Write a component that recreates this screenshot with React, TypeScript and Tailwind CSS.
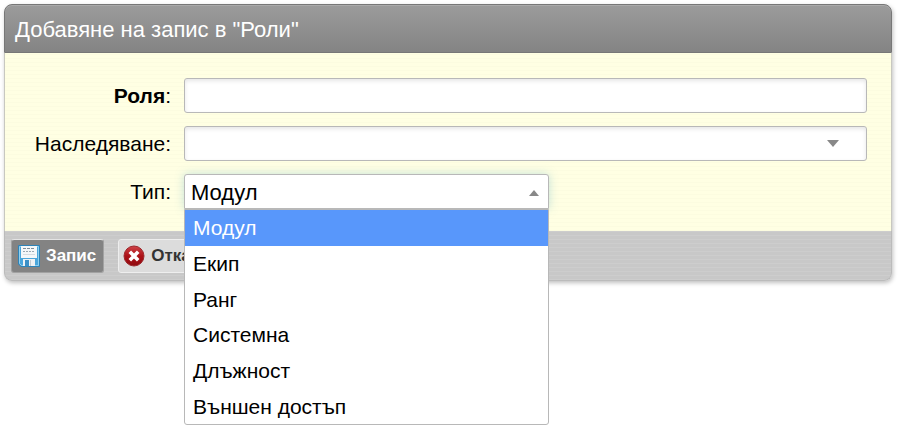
import { useState } from "react";

const types = ["Модул", "Екип", "Ранг", "Системна", "Длъжност", "Външен достъп"];

const field =
  "h-[35px] w-full appearance-none rounded-[3px] border border-[#b8b8b8] bg-white px-1.5 text-[22px] text-black outline-none";

const SaveIcon = () => (
  <svg width="22" height="22" viewBox="0 0 22 22" aria-hidden="true">
    <path d="M.5 .5h21v21H3L.5 19z" fill="#4aa6dc" stroke="#2e83b8" />
    <path d="M1.5 1.5h19v19h-17l-2-2z" fill="none" stroke="#8fd0f0" />
    <rect x="3" y="1" width="16" height="12" fill="#f4f7f9" />
    <path d="M5 3.5h12" stroke="#7d8d9a" strokeDasharray="3 1" />
    <path d="M5 6.5h12" stroke="#9aa7b2" strokeDasharray="2 1" />
    <path d="M5 9.5h12" stroke="#d5dce2" />
    <rect x="5" y="14" width="12" height="7" fill="#eef1f4" />
    <rect x="7" y="15" width="4" height="6" fill="#3b8fc6" />
    <path d="M12.5 15v6" stroke="#c3cbd2" />
  </svg>
);

const CancelIcon = () => (
  <svg width="22" height="22" viewBox="0 0 22 22" aria-hidden="true">
    <defs>
      <linearGradient id="red" x1="0" y1="0" x2="0" y2="1">
        <stop offset="0" stopColor="#cf4448" />
        <stop offset="0.5" stopColor="#ac1117" />
        <stop offset="1" stopColor="#8f0a0f" />
      </linearGradient>
    </defs>
    <circle cx="11" cy="11" r="10" fill="url(#red)" stroke="#9c2a2e" />
    <path d="M6.8 6.8l8.4 8.4M15.2 6.8l-8.4 8.4" stroke="#fff" strokeWidth="3.6" />
  </svg>
);

const App = () => {
  const [type, setType] = useState(types[0]);
  const [parent, setParent] = useState("");

  return (
    <div className="min-h-screen bg-white py-1 pr-1.5 pl-1 font-['Liberation_Sans',Arial,sans-serif]">
      <form
        className="rounded-lg shadow-[1px_2px_4px_rgba(0,0,0,0.25)]"
        onSubmit={(e) => e.preventDefault()}
      >
        <h1 className="rounded-t-lg border border-[#777] bg-linear-to-b from-[#9b9b9b] to-[#848484] px-2.5 pt-[9px] pb-[7px] text-[22px] leading-[31px] text-white shadow-[inset_0_1px_0_#aaa]">
          Добавяне на запис в "Роли"
        </h1>

        <div className="grid grid-cols-[166px_1fr] items-center gap-x-[13px] gap-y-[13px] border-x border-[#c8c8c0] bg-[#ffffe3] bg-[repeating-linear-gradient(0deg,#fcfce0_0_1px,transparent_1px_4px)] pt-[25px] pr-6 pb-[22px] text-[21px] leading-[35px]">
          <label htmlFor="role" className="text-right">
            <b>Роля</b>:
          </label>
          <input
            id="role"
            type="text"
            className={`${field} shadow-[inset_0_2px_4px_rgba(0,0,0,0.1)]`}
          />

          <label htmlFor="inherit" className="text-right">
            Наследяване:
          </label>
          <div className="relative">
            <select
              id="inherit"
              value={parent}
              onChange={(e) => setParent(e.target.value)}
              className={`${field} block shadow-[inset_0_2px_4px_rgba(0,0,0,0.1)]`}
            >
              <option value=""></option>
            </select>
            <svg className="pointer-events-none absolute top-3.5 right-7" width="12" height="7" aria-hidden="true">
              <path d="M0 0h12L6 7z" fill="#888" />
            </svg>
          </div>

          <label htmlFor="type" className="text-right">
            Тип:
          </label>
          <div className="relative w-[365px]">
            <select
              id="type"
              value={type}
              onChange={(e) => setType(e.target.value)}
              className={`${field} block rounded-b-none pb-0.5 shadow-[0_0_10px_rgba(82,168,200,0.35)]`}
            >
              {types.map((name) => (
                <option key={name}>{name}</option>
              ))}
            </select>
            <svg className="pointer-events-none absolute top-4 right-2.5" width="10" height="6" aria-hidden="true">
              <path d="M0 6h10L5 0z" fill="#888" />
            </svg>

            <ul
              role="listbox"
              aria-label="Тип"
              className="absolute top-full left-0 z-10 flex h-[216px] w-full flex-col rounded-b-[3px] border border-[#b8b8b8] bg-white"
            >
              {types.map((name) => (
                <li
                  key={name}
                  role="option"
                  aria-selected={name === type}
                  onClick={() => setType(name)}
                  className={`flex flex-1 items-center px-2 ${name === type ? "bg-[#5897fb] text-white" : "text-black"}`}
                >
                  {name}
                </li>
              ))}
            </ul>
          </div>
        </div>

        <div className="flex gap-3.5 rounded-b-lg border border-t-0 border-[#bbb] bg-[#c8c8c8] bg-[repeating-linear-gradient(0deg,#cdcdcd_0_1px,transparent_1px_4px)] px-1.5 pt-2 pb-[7px] text-[17px] font-bold">
          <button
            type="submit"
            className="flex h-[34px] items-center gap-1.5 rounded-[3px] border border-[#a2a2a2] border-t-[#e4e4e4] bg-[#838383] pr-[7px] pl-1.5 text-white"
          >
            <SaveIcon />
            Запис
          </button>
          <button
            type="button"
            className="flex h-[34px] items-center gap-1.5 rounded-[3px] border border-[#eee] bg-[#dcdcdc] px-1 text-[#333]"
          >
            <CancelIcon />
            Отказ
          </button>
        </div>
      </form>
    </div>
  );
};

export default App;
